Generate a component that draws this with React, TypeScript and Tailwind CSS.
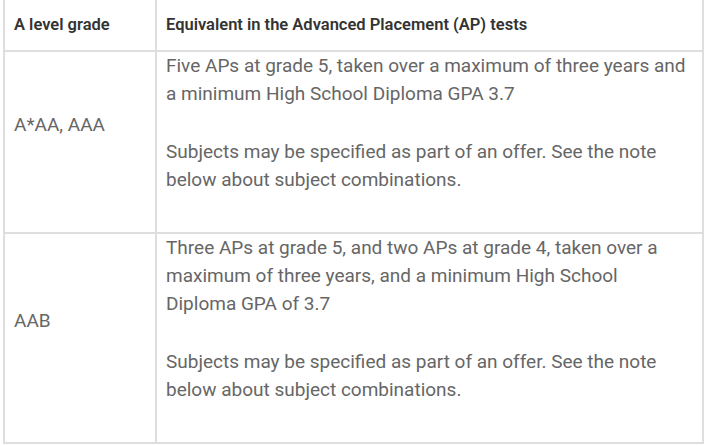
import React from "react";

const rows = [
  {
    grade: "A*AA, AAA",
    paras: [
      "Five APs at grade 5, taken over a maximum of three years and a minimum High School Diploma GPA 3.7",
      "Subjects may be specified as part of an offer. See the note below about subject combinations.",
    ],
  },
  {
    grade: "AAB",
    paras: [
      "Three APs at grade 5, and two APs at grade 4, taken over a maximum of three years, and a minimum High School Diploma GPA of 3.7",
      "Subjects may be specified as part of an offer. See the note below about subject combinations.",
    ],
  },
];

export default function App() {
  return (
    <div className="w-[707px] h-[446px] bg-white overflow-hidden pl-[3px] font-['Roboto',sans-serif]">
      <table className="w-[701px] border-collapse table-fixed">
        <colgroup>
          <col className="w-[152px]" />
          <col />
        </colgroup>
        <thead>
          <tr className="h-[51px]">
            <th className="border-x-2 border-b-2 border-[#dedede] px-[9px] text-left align-middle text-[16.5px] font-semibold text-[#333]">
              A level grade
            </th>
            <th className="border-x-2 border-b-2 border-[#dedede] px-[9px] text-left align-middle text-[16.5px] font-semibold text-[#333]">
              Equivalent in the Advanced Placement (AP) tests
            </th>
          </tr>
        </thead>
        <tbody>
          {rows.map((r, i) => (
            <tr key={i}>
              <td className="border-2 border-[#dedede] px-[9px] py-0 align-middle text-[19px] leading-[28px] text-[#666]">
                <p className="mb-[34px]">{r.grade}</p>
              </td>
              <td className="border-2 border-[#dedede] pl-[9px] pr-[14px] py-0 align-middle text-[19px] leading-[28px] text-[#666]">
                <p className="mb-[30px]">{r.paras[0]}</p>
                <p className="mb-[38px]">{r.paras[1]}</p>
              </td>
            </tr>
          ))}
        </tbody>
      </table>
    </div>
  );
}
